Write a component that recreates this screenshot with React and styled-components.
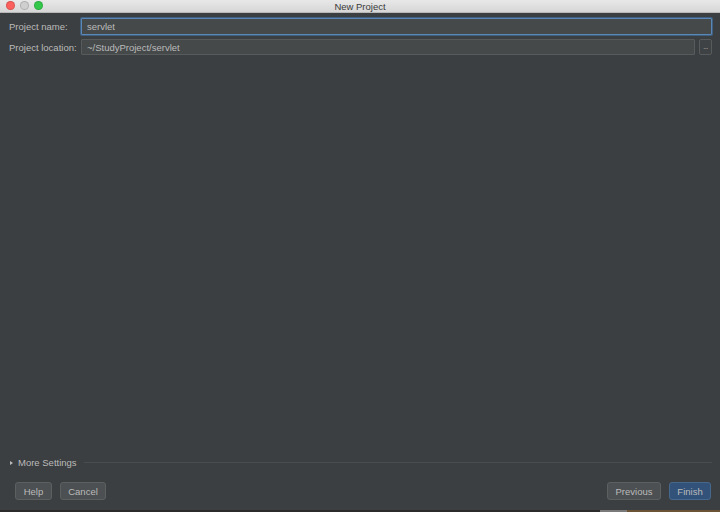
import React from "react"
import styled, { createGlobalStyle } from "styled-components"

const Global = createGlobalStyle`
  html, body {
    margin: 0;
    padding: 0;
    background: #3c3f41;
    font-family: "Liberation Sans", Arial, sans-serif;
  }
  * { box-sizing: border-box; }
`

const Window = styled.div`
  width: 720px;
  height: 512px;
  display: flex;
  flex-direction: column;
  background: #3c3f41;
  overflow: hidden;
`

const TitleBar = styled.div`
  height: 13px;
  flex-shrink: 0;
  position: relative;
  display: flex;
  align-items: center;
  justify-content: center;
  background: linear-gradient(#e8e8e8, #d6d6d6);
  border-bottom: 1px solid #b8b8b8;
  color: #3a3a3a;
  font-size: 9.5px;
`

const Lights = styled.div`
  position: absolute;
  left: 6px;
  top: 1px;
  display: flex;
  gap: 5px;
`

const Light = styled.span`
  width: 9px;
  height: 9px;
  border-radius: 50%;
  background: ${p => p.color};
  border: 0.5px solid rgba(0, 0, 0, 0.15);
`

const Body = styled.div`
  flex: 1;
  display: flex;
  flex-direction: column;
  padding: 5px 8px 0 9px;
`

const Form = styled.div`
  display: grid;
  grid-template-columns: 72px 1fr;
  row-gap: 4px;
  align-items: center;
`

const Label = styled.div`
  color: #bbbbbb;
  font-size: 9.5px;
`

const FieldRow = styled.div`
  display: flex;
  gap: 4px;
`

const Input = styled.div`
  flex: 1;
  height: ${p => (p.focused ? "17px" : "16px")};
  display: flex;
  align-items: center;
  padding: 0 5px;
  background: #45494a;
  border: 1px solid ${p => (p.focused ? "#5b87b6" : "#575b5c")};
  box-shadow: ${p => (p.focused ? "0 0 0 1px #3f5f80" : "none")};
  border-radius: 1px;
  color: #bbbbbb;
  font-size: 9.5px;
`

const Browse = styled.div`
  width: 13px;
  height: 16px;
  display: flex;
  align-items: flex-end;
  justify-content: center;
  padding-bottom: 4px;
  border: 1px solid #575b5c;
  background: #3f4244;
  border-radius: 2px;
  color: #bbbbbb;
  font-size: 7px;
  letter-spacing: -0.5px;
  line-height: 1;
`

const Spacer = styled.div`
  flex: 1;
`

const MoreRow = styled.div`
  display: flex;
  align-items: center;
  gap: 4px;
  padding-left: 1px;
  color: #bbbbbb;
  font-size: 9.5px;
`

const Triangle = styled.span`
  width: 0;
  height: 0;
  border-top: 2.5px solid transparent;
  border-bottom: 2.5px solid transparent;
  border-left: 3.5px solid #bbbbbb;
  margin-right: 1px;
`

const Rule = styled.div`
  flex: 1;
  height: 1px;
  background: #4a4d4f;
  margin-left: 3px;
`

const Buttons = styled.div`
  display: flex;
  gap: 8px;
  padding: 14px 1px 10px 6px;
`

const Button = styled.div`
  height: 18px;
  width: ${p => p.w}px;
  display: flex;
  align-items: center;
  justify-content: center;
  border-radius: 3px;
  background: ${p => (p.primary ? "#33527a" : "#4c5052")};
  border: 1px solid ${p => (p.primary ? "#46688c" : "#5e6060")};
  color: #bbbbbb;
  font-size: 9.5px;
`

const BottomStrip = styled.div`
  height: 2px;
  flex-shrink: 0;
  background: linear-gradient(90deg, #2b2b2b 0 600px, #7a7a7a 600px 627px, #6b5436 627px);
`

export default function App() {
  return (
    <>
      <Global />
      <Window>
        <TitleBar>
          <Lights>
            <Light color="#fc605c" />
            <Light color="#cfcfcf" />
            <Light color="#34c84a" />
          </Lights>
          New Project
        </TitleBar>
        <Body>
          <Form>
            <Label>Project name:</Label>
            <FieldRow>
              <Input focused>servlet</Input>
            </FieldRow>
            <Label>Project location:</Label>
            <FieldRow>
              <Input>~/StudyProject/servlet</Input>
              <Browse>...</Browse>
            </FieldRow>
          </Form>
          <Spacer />
          <MoreRow>
            <Triangle />
            More Settings
            <Rule />
          </MoreRow>
          <Buttons>
            <Button w={37}>Help</Button>
            <Button w={46}>Cancel</Button>
            <Spacer />
            <Button w={54}>Previous</Button>
            <Button w={42} primary>Finish</Button>
          </Buttons>
        </Body>
        <BottomStrip />
      </Window>
    </>
  )
}
